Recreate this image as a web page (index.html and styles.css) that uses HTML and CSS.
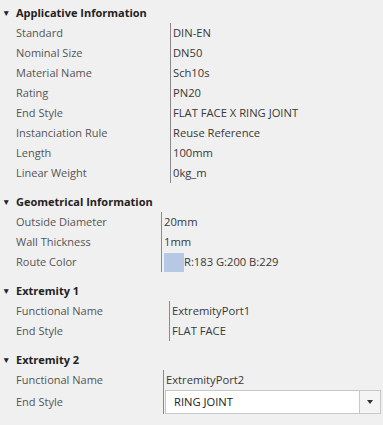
FILE: index.html
```html
<!DOCTYPE html>
<html lang="en">
<head>
    <meta charset="UTF-8">
    <title>Properties</title>
    <link rel="stylesheet" href="styles.css">
</head>
<body>
    <div class="panel">
        <div class="group">
            <div class="group-title"><span class="caret">&#9660;</span>Applicative Information</div>
            <div class="props props-a">
                <div class="label">Standard</div><div class="value">DIN-EN</div>
                <div class="label">Nominal Size</div><div class="value">DN50</div>
                <div class="label">Material Name</div><div class="value">Sch10s</div>
                <div class="label">Rating</div><div class="value">PN20</div>
                <div class="label">End Style</div><div class="value">FLAT FACE X RING JOINT</div>
                <div class="label">Instanciation Rule</div><div class="value">Reuse Reference</div>
                <div class="label">Length</div><div class="value">100mm</div>
                <div class="label">Linear Weight</div><div class="value">0kg_m</div>
            </div>
        </div>

        <div class="group">
            <div class="group-title"><span class="caret">&#9660;</span>Geometrical Information</div>
            <div class="props props-b">
                <div class="label">Outside Diameter</div><div class="value">20mm</div>
                <div class="label">Wall Thickness</div><div class="value">1mm</div>
                <div class="label">Route Color</div>
                <div class="value color-value"><span class="swatch"></span>R:183 G:200 B:229</div>
            </div>
        </div>

        <div class="group">
            <div class="group-title"><span class="caret">&#9660;</span>Extremity 1</div>
            <div class="props props-c">
                <div class="label">Functional Name</div><div class="value">ExtremityPort1</div>
                <div class="label">End Style</div><div class="value">FLAT FACE</div>
            </div>
        </div>

        <div class="group">
            <div class="group-title"><span class="caret">&#9660;</span>Extremity 2</div>
            <div class="props props-d">
                <div class="label">Functional Name</div><div class="value">ExtremityPort2</div>
                <div class="label label-tall">End Style</div>
                <div class="value value-tall">
                    <div class="combo">
                        <span class="combo-text">RING JOINT</span>
                        <span class="combo-btn"><span class="combo-arrow"></span></span>
                    </div>
                </div>
            </div>
        </div>
    </div>
</body>
</html>
```

FILE: styles.css
```css
body {
    margin: 0;
    background-color: #f0f0f0;
    font-family: "Open Sans", "Noto Sans", sans-serif;
    font-size: 11px;
    color: #444;
}

.panel {
    padding-top: 3px;
    display: flex;
    flex-direction: column;
    gap: 9px;
}

.group-title {
    height: 20px;
    line-height: 20px;
    font-weight: bold;
    color: #222;
    font-size: 11px;
    display: flex;
    align-items: center;
}

.caret {
    width: 16px;
    padding-left: 2px;
    box-sizing: border-box;
    font-size: 8.5px;
    color: #222;
}

.props {
    display: grid;
    padding-left: 16px;
    grid-auto-rows: 20px;
}

.props-a { grid-template-columns: 154px 1fr; }
.props-b { grid-template-columns: 145px 1fr; }
.props-c { grid-template-columns: 153px 1fr; }
.props-d { grid-template-columns: 147px 1fr; grid-template-rows: 20px 24px; }

.label {
    line-height: 20px;
    color: #555;
    white-space: nowrap;
}

.value {
    line-height: 20px;
    border-left: 1px solid #8a8a8a;
    padding-left: 2px;
    color: #383838;
    font-size: 11.2px;
    white-space: nowrap;
}

.label-tall {
    line-height: 24px;
}

.color-value {
    display: flex;
    align-items: center;
}

.swatch {
    width: 20px;
    height: 19px;
    background-color: #b7c8e5;
}

.value-tall {
    padding-left: 1px;
    padding-right: 2px;
}

.combo {
    height: 24px;
    box-sizing: border-box;
    border: 1px solid #c8c8c8;
    background: #fff;
    display: flex;
    align-items: center;
}

.combo-text {
    flex: 1;
    padding-left: 8px;
    color: #222;
}

.combo-btn {
    width: 20px;
    height: 100%;
    border-left: 1px solid #c8c8c8;
    background: #f4f4f4;
    display: flex;
    align-items: center;
    justify-content: center;
}

.combo-arrow {
    width: 0;
    height: 0;
    border-left: 3px solid transparent;
    border-right: 3px solid transparent;
    border-top: 4px solid #333;
}
```
